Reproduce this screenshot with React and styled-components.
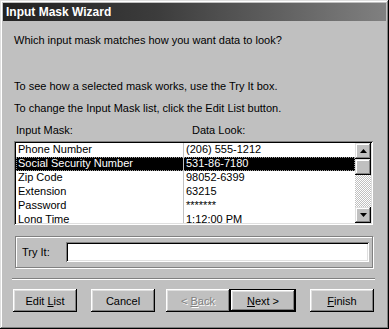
import React from "react";
import styled, { createGlobalStyle, css } from "styled-components";

const Global = createGlobalStyle`
  html, body { margin: 0; padding: 0; background: #c0c0c0; }
  body { font-family: "Liberation Sans", Arial, sans-serif; font-size: 11px; color: #000; }
`;

const raised = css`
  background: #c0c0c0;
  box-shadow: inset -1px -1px #000, inset 1px 1px #fff, inset -2px -2px #808080, inset 2px 2px #dfdfdf;
`;

const sunken = css`
  background: #fff;
  box-shadow: inset 1px 1px #808080, inset -1px -1px #fff, inset 2px 2px #000, inset -2px -2px #dfdfdf;
`;

const Window = styled.div`
  width: 389px;
  height: 329px;
  box-sizing: border-box;
  padding: 3px;
  background: #c0c0c0;
  box-shadow: inset -1px -1px #000, inset 1px 1px #dfdfdf, inset -2px -2px #808080, inset 2px 2px #fff;
  display: flex;
  flex-direction: column;
`;

const TitleBar = styled.div`
  height: 18px;
  display: flex;
  align-items: center;
  padding-left: 3px;
  background: linear-gradient(to right, #222, #3c3c3c 40%, #808080);
  color: #fff;
  font-weight: bold;
  font-size: 12px;
`;

const Body = styled.div`
  padding: 0 11px;
  display: flex;
  flex-direction: column;
`;

const Line = styled.div`
  line-height: 14px;
  height: 14px;
  margin-top: ${(p) => p.$mt}px;
  white-space: nowrap;
`;

const Labels = styled.div`
  display: flex;
  line-height: 14px;
  margin-top: 8px;
`;

const Label = styled.span`
  width: ${(p) => p.$w}px;
  padding-left: ${(p) => p.$pl || 0}px;
`;

const ListBox = styled.div`
  ${sunken};
  margin-top: 4px;
  width: 359px;
  height: 84px;
  box-sizing: border-box;
  padding: 2px;
  display: flex;
`;

const Rows = styled.div`
  flex: 1;
  overflow: hidden;
`;

const Row = styled.div`
  display: flex;
  height: 14px;
  line-height: 13px;
  white-space: nowrap;
  background: ${(p) => (p.$sel ? "#000" : "transparent")};
  color: ${(p) => (p.$sel ? "#fff" : "#000")};
  outline: ${(p) => (p.$sel ? "1px dotted #9a9a9a" : "none")};
  outline-offset: -1px;
`;

const Cell = styled.div`
  box-sizing: border-box;
  width: ${(p) => p.$w}px;
  padding-left: ${(p) => p.$pl}px;
  border-left: ${(p) => (p.$div ? "1px solid #c0c0c0" : "none")};
  overflow: hidden;
`;

const ScrollBar = styled.div`
  width: 16px;
  display: flex;
  flex-direction: column;
`;

const ScrollBtn = styled.div`
  width: 16px;
  height: 16px;
  flex: none;
  background: #c0c0c0;
  box-shadow: inset -1px -1px #000, inset 1px 1px #dfdfdf, inset -2px -2px #808080, inset 2px 2px #fff;
  display: flex;
  align-items: center;
  justify-content: center;
`;

const Track = styled.div`
  flex: 1;
  background-color: #fff;
  background-image: conic-gradient(#c0c0c0 25%, #fff 0 50%, #c0c0c0 0 75%, #fff 0);
  background-size: 2px 2px;
`;

const Group = styled.div`
  margin: 11px 2px 0 1px;
  height: 32px;
  box-sizing: border-box;
  border: 1px solid #808080;
  box-shadow: inset 1px 1px #fff, 1px 1px #fff;
  display: flex;
  align-items: center;
  padding: 0 3px 0 6px;
`;

const TryLabel = styled.span`
  width: 44px;
`;

const Field = styled.div`
  ${sunken};
  flex: 1;
  height: 20px;
`;

const Separator = styled.div`
  margin: 10px 0 0 -2px;
  height: 0;
  border-top: 1px solid #808080;
  border-bottom: 1px solid #fff;
`;

const Buttons = styled.div`
  display: flex;
  margin: 9px 0 0 -1px;
`;

const Button = styled.div`
  ${raised};
  box-sizing: border-box;
  width: ${(p) => p.$w || 64}px;
  height: 23px;
  margin-left: ${(p) => p.$ml || 0}px;
  display: flex;
  align-items: center;
  justify-content: center;
  white-space: pre;
  color: ${(p) => (p.$disabled ? "#808080" : "#000")};
  text-shadow: ${(p) => (p.$disabled ? "1px 1px #fff" : "none")};
  ${(p) =>
    p.$default &&
    css`
      border: 1px solid #000;
    `}
`;

const Caption = styled.span`
  white-space: pre;
`;

const U = styled.span`
  text-decoration: underline;
`;

const Up = () => (
  <svg width="7" height="4" viewBox="0 0 7 4">
    <polygon points="3.5,0 7,4 0,4" fill="#000" />
  </svg>
);
const Down = () => (
  <svg width="7" height="4" viewBox="0 0 7 4">
    <polygon points="0,0 7,0 3.5,4" fill="#000" />
  </svg>
);

const items = [
  ["Phone Number", "(206) 555-1212"],
  ["Social Security Number", "531-86-7180"],
  ["Zip Code", "98052-6399"],
  ["Extension", "63215"],
  ["Password", "*******"],
  ["Long Time", "1:12:00 PM"],
];

export default function App() {
  return (
    <>
      <Global />
      <Window>
        <TitleBar>Input Mask Wizard</TitleBar>
        <Body>
          <Line $mt={12}>Which input mask matches how you want data to look?</Line>
          <Line $mt={32}>To see how a selected mask works, use the Try It box.</Line>
          <Line $mt={8}>To change the Input Mask list, click the Edit List button.</Line>
          <Labels>
            <Label $w={176} $pl={2}>Input Mask:</Label>
            <Label>Data Look:</Label>
          </Labels>
          <ListBox>
            <Rows>
              {items.map(([a, b], i) => (
                <Row key={a} $sel={i === 1}>
                  <Cell $w={167} $pl={2}>{a}</Cell>
                  <Cell $div $pl={2} $w={172}>{b}</Cell>
                </Row>
              ))}
            </Rows>
            <ScrollBar>
              <ScrollBtn><Up /></ScrollBtn>
              <ScrollBtn />
              <Track />
              <ScrollBtn><Down /></ScrollBtn>
            </ScrollBar>
          </ListBox>
          <Group>
            <TryLabel>Try It:</TryLabel>
            <Field />
          </Group>
          <Separator />
          <Buttons>
            <Button>
              <Caption>Edit <U>L</U>ist</Caption>
            </Button>
            <Button $ml={14}>
              <Caption>Cancel</Caption>
            </Button>
            <Button $ml={11} $disabled>
              <Caption>&lt; <U>B</U>ack</Caption>
            </Button>
            <Button $w={66} $default>
              <Caption><U>N</U>ext &gt;</Caption>
            </Button>
            <Button $ml={14}>
              <Caption><U>F</U>inish</Caption>
            </Button>
          </Buttons>
        </Body>
      </Window>
    </>
  );
}
